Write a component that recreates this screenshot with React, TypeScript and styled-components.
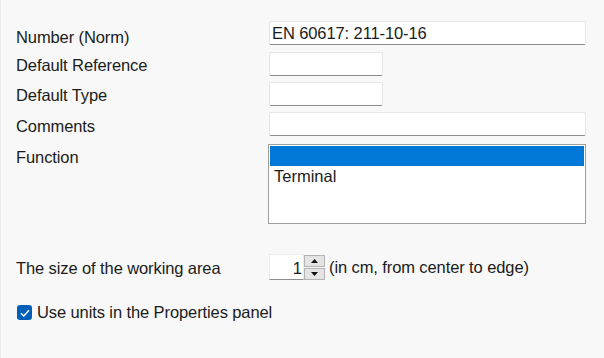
import styled, { createGlobalStyle } from "styled-components";

const GlobalStyle = createGlobalStyle`
  html, body {
    margin: 0;
    padding: 0;
    background: #f8f8f8;
  }
  body {
    font-family: "Liberation Sans", Arial, sans-serif;
    font-size: 16.5px;
    color: #1b1b1b;
  }
`;

const Page = styled.div`
  width: 604px;
  height: 358px;
  box-sizing: border-box;
  padding: 21px 18px 0 15px;
  background: #f8f8f8;
  border-left: 1px solid #ececec;
`;

const Form = styled.div`
  display: grid;
  grid-template-columns: 253px 1fr;
  grid-template-rows: 25px 24px 24px 26px 80px;
  row-gap: 6px;
`;

const Label = styled.div<{ $offset?: number }>`
  padding-top: ${({ $offset }) => $offset ?? 4}px;
  line-height: 18px;
  letter-spacing: -0.1px;
  white-space: nowrap;
`;

const TextInput = styled.div<{ $w?: number }>`
  box-sizing: border-box;
  width: ${({ $w }) => ($w ? `${$w}px` : "100%")};
  height: 24px;
  background: #fff;
  border: 1px solid #e6e6e6;
  border-bottom-color: #8d8d8d;
  border-radius: 2px;
  padding: 0 2px;
  line-height: 22px;
  letter-spacing: -0.1px;
`;

const ListBox = styled.div`
  box-sizing: border-box;
  width: 318px;
  height: 80px;
  margin-left: -1px;
  background: #fff;
  border: 1px solid #a0a0a0;
  padding: 1px 1px;
`;

const ListItem = styled.div<{ $selected?: boolean }>`
  height: 20px;
  line-height: 20px;
  padding-left: 4px;
  background: ${({ $selected }) => ($selected ? "#0078d7" : "transparent")};
  color: ${({ $selected }) => ($selected ? "#fff" : "#1b1b1b")};
`;

const SizeRow = styled.div`
  display: grid;
  grid-template-columns: 253px auto;
  align-items: center;
  margin-top: 30px;
`;

const SizeLabel = styled.div`
  letter-spacing: -0.1px;
  padding-top: 2px;
`;

const SpinGroup = styled.div`
  display: flex;
  align-items: center;
  gap: 4px;
`;

const Spinner = styled.div`
  display: flex;
  height: 26px;
`;

const SpinValue = styled.div`
  box-sizing: border-box;
  width: 35px;
  height: 26px;
  background: #fff;
  border: 1px solid #ececec;
  border-bottom-color: #8d8d8d;
  text-align: right;
  padding-right: 1px;
  line-height: 26px;
`;

const SpinButtons = styled.div`
  display: flex;
  flex-direction: column;
  width: 21px;
  gap: 1px;
  padding-top: 1px;
`;

const SpinButton = styled.div`
  flex: 1;
  display: grid;
  place-items: center;
  background: #e4e4e4;
  border: 1px solid #b3b3b3;
`;

const Hint = styled.div`
  letter-spacing: -0.1px;
`;

const CheckRow = styled.div`
  display: flex;
  align-items: center;
  gap: 5px;
  margin-top: 23px;
  padding-left: 1px;
`;

const CheckBox = styled.div`
  width: 15px;
  height: 15px;
  border-radius: 3px;
  background: #005fb8;
  display: grid;
  place-items: center;
`;

const CheckText = styled.span`
  letter-spacing: -0.1px;
`;

const Arrow = ({ up }: { up?: boolean }) => (
  <svg width="7" height="4" viewBox="0 0 7 4">
    <path d={up ? "M0 4 L3.5 0 L7 4 Z" : "M0 0 L3.5 4 L7 0 Z"} fill="#111" />
  </svg>
);

export default function App() {
  return (
    <>
      <GlobalStyle />
      <Page>
        <Form>
          <Label $offset={7}>Number (Norm)</Label>
          <TextInput>EN 60617: 211-10-16</TextInput>
          <Label>Default Reference</Label>
          <TextInput $w={114} />
          <Label>Default Type</Label>
          <TextInput $w={114} />
          <Label $offset={5}>Comments</Label>
          <TextInput />
          <Label>Function</Label>
          <ListBox>
            <ListItem $selected />
            <ListItem>Terminal</ListItem>
          </ListBox>
        </Form>
        <SizeRow>
          <SizeLabel>The size of the working area</SizeLabel>
          <SpinGroup>
            <Spinner>
              <SpinValue>1</SpinValue>
              <SpinButtons>
                <SpinButton>
                  <Arrow up />
                </SpinButton>
                <SpinButton>
                  <Arrow />
                </SpinButton>
              </SpinButtons>
            </Spinner>
            <Hint>(in cm, from center to edge)</Hint>
          </SpinGroup>
        </SizeRow>
        <CheckRow>
          <CheckBox>
            <svg width="10" height="8" viewBox="0 0 10 8">
              <path d="M1 4.2 L3.8 7 L9 1.2" stroke="#fff" strokeWidth="1.4" fill="none" />
            </svg>
          </CheckBox>
          <CheckText>Use units in the Properties panel</CheckText>
        </CheckRow>
      </Page>
    </>
  );
}
